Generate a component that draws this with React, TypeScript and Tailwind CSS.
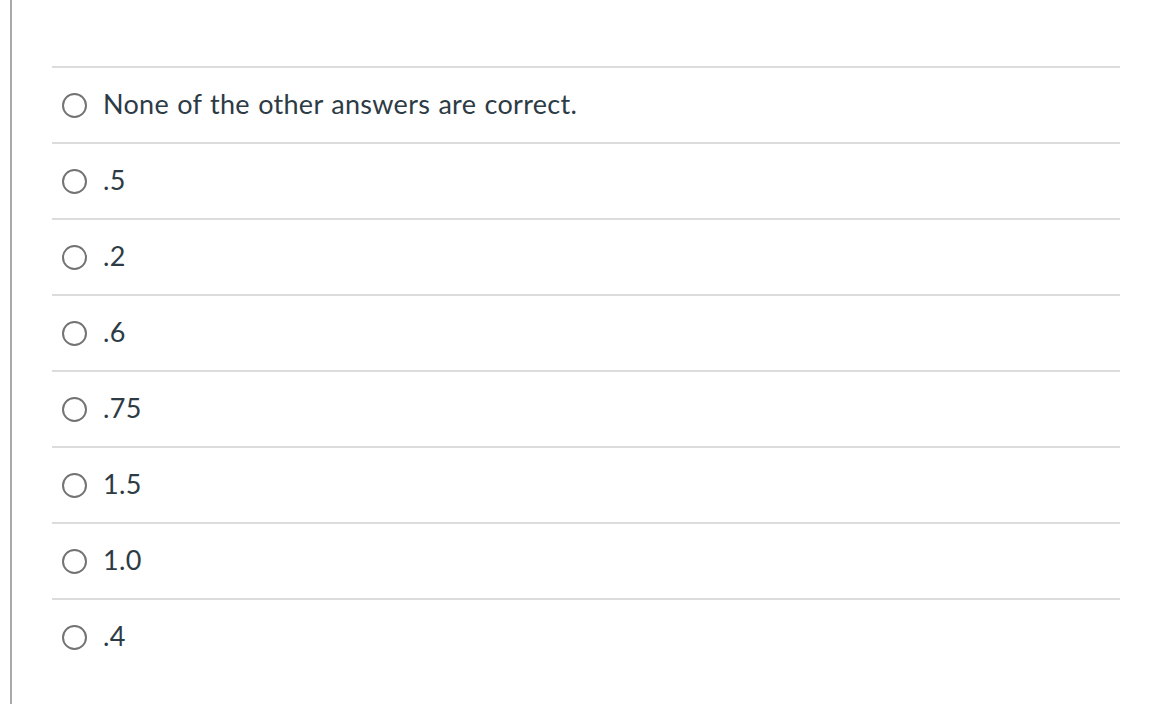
import React from "react";

const answers = [
  "None of the other answers are correct.",
  ".5",
  ".2",
  ".6",
  ".75",
  "1.5",
  "1.0",
  ".4",
];

export default function App() {
  return (
    <div className="w-[1156px] h-[704px] bg-white overflow-hidden" style={{ fontFamily: "Lato, 'Open Sans', sans-serif" }}>
      <div className="ml-[10px] h-full border-l-2 border-[#a9a9a9] pl-[40px] pt-[66px]">
        <div className="w-[1068px]">
          {answers.map((a, i) => (
            <div key={i} className="border-t-2 border-[#dcdcdc] h-[76px] flex items-center">
              <span className="ml-[10px] w-[25px] h-[25px] rounded-full border-2 border-[#737373] shrink-0" />
              <span className="ml-[16px] text-[27px] tracking-[0.3px] [word-spacing:1px] text-[#2d3b45] leading-none -mt-[3px]">{a}</span>
            </div>
          ))}
        </div>
      </div>
    </div>
  );
}
